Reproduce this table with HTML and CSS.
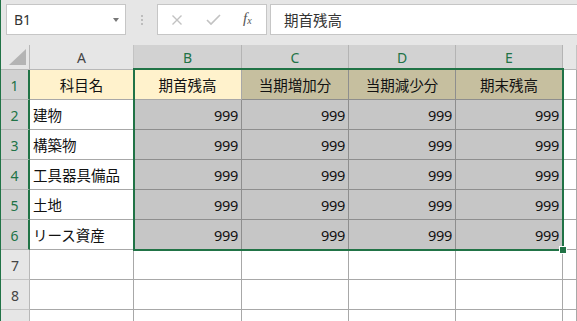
FILE: index.html
```html
<!DOCTYPE html>
<html lang="ja">
<head>
<meta charset="utf-8">
<title>Book1 - Excel</title>
<link rel="stylesheet" href="styles.css">
</head>
<body>
<div class="app">
  <div class="formula-bar">
    <div class="name-box">
      <span class="name-text">B1</span>
      <span class="caret"></span>
    </div>
    <div class="grip"><i></i><i></i><i></i></div>
    <div class="fx-box">
      <svg class="icon" width="12" height="12" viewBox="0 0 12 12"><path d="M1.5 1.5 L10.5 10.5 M10.5 1.5 L1.5 10.5" stroke="#c2c2c2" stroke-width="1.4" fill="none"/></svg>
      <svg class="icon" width="15" height="12" viewBox="0 0 15 12"><path d="M1 6 L5 10 L14 1" stroke="#c2c2c2" stroke-width="1.6" fill="none"/></svg>
      <span class="fx">f<sub>x</sub></span>
    </div>
    <div class="formula-input">期首残高</div>
  </div>

  <div class="sheet">
    <div class="cell corner"><span class="tri"></span></div>
    <div class="cell colhead">A</div>
    <div class="cell colhead sel">B</div>
    <div class="cell colhead sel">C</div>
    <div class="cell colhead sel">D</div>
    <div class="cell colhead sel">E</div>
    <div class="cell colhead"></div>

    <div class="cell rowhead sel">1</div>
    <div class="cell title center">科目名</div>
    <div class="cell title center">期首残高</div>
    <div class="cell tan center">当期増加分</div>
    <div class="cell tan center">当期減少分</div>
    <div class="cell tan center">期末残高</div>
    <div class="cell"></div>

    <div class="cell rowhead sel">2</div>
    <div class="cell">建物</div>
    <div class="cell num">999</div>
    <div class="cell num">999</div>
    <div class="cell num">999</div>
    <div class="cell num">999</div>
    <div class="cell"></div>

    <div class="cell rowhead sel">3</div>
    <div class="cell">構築物</div>
    <div class="cell num">999</div>
    <div class="cell num">999</div>
    <div class="cell num">999</div>
    <div class="cell num">999</div>
    <div class="cell"></div>

    <div class="cell rowhead sel">4</div>
    <div class="cell">工具器具備品</div>
    <div class="cell num">999</div>
    <div class="cell num">999</div>
    <div class="cell num">999</div>
    <div class="cell num">999</div>
    <div class="cell"></div>

    <div class="cell rowhead sel">5</div>
    <div class="cell">土地</div>
    <div class="cell num">999</div>
    <div class="cell num">999</div>
    <div class="cell num">999</div>
    <div class="cell num">999</div>
    <div class="cell"></div>

    <div class="cell rowhead sel">6</div>
    <div class="cell">リース資産</div>
    <div class="cell num">999</div>
    <div class="cell num">999</div>
    <div class="cell num">999</div>
    <div class="cell num">999</div>
    <div class="cell"></div>

    <div class="cell rowhead">7</div>
    <div class="cell"></div><div class="cell"></div><div class="cell"></div><div class="cell"></div><div class="cell"></div><div class="cell"></div>

    <div class="cell rowhead">8</div>
    <div class="cell"></div><div class="cell"></div><div class="cell"></div><div class="cell"></div><div class="cell"></div><div class="cell"></div>

    <div class="cell rowhead"></div>
    <div class="cell"></div><div class="cell"></div><div class="cell"></div><div class="cell"></div><div class="cell"></div><div class="cell"></div>
  </div>

  <!-- range B1:E6 selection frame with its fill handle -->
  <div class="selection"></div>
  <div class="fill-handle"></div>
</div>
</body>
</html>
```

FILE: styles.css
```css
* { box-sizing: border-box; }

html, body {
  margin: 0;
  padding: 0;
  background: #ffffff;
  overflow: hidden;
}

.app {
  position: relative;
  width: 577px;
  height: 321px;
  overflow: hidden;
  border-left: 1px solid #217346;
  background: #e6e6e6;
  font-family: "Noto Sans CJK JP", "Noto Sans", sans-serif;
  color: #1a1a1a;
}

/* ---------- formula bar ---------- */
.formula-bar {
  height: 45px;
  display: flex;
  align-items: flex-start;
  padding-top: 4px;
}

.name-box {
  margin-left: 5px;
  width: 120px;
  height: 31px;
  background: #fff;
  border: 1px solid #c6c6c6;
  display: flex;
  align-items: center;
  justify-content: space-between;
  padding: 0 6px 0 7px;
}

.name-text {
  font-family: "Noto Sans", sans-serif;
  font-size: 14px;
  color: #333;
}

.caret {
  width: 0;
  height: 0;
  border-left: 3.5px solid transparent;
  border-right: 3.5px solid transparent;
  border-top: 4px solid #777;
}

.grip {
  width: 31px;
  height: 31px;
  display: flex;
  flex-direction: column;
  align-items: center;
  justify-content: center;
  gap: 2px;
}

.grip i {
  display: block;
  width: 2px;
  height: 2px;
  background: #bdbdbd;
}

.fx-box {
  width: 110px;
  height: 31px;
  background: #fff;
  border: 1px solid #c6c6c6;
  display: flex;
  align-items: center;
  padding-left: 13px;
  gap: 0;
}

.fx-box .icon:first-child { margin-right: 23px; }
.fx-box .icon:nth-child(2) { margin-right: 22px; }

.fx {
  font-family: "Liberation Serif", serif;
  font-style: italic;
  font-size: 15px;
  color: #555;
  line-height: 1;
  margin-top: -3px;
}

.fx sub {
  font-size: 10px;
  vertical-align: -1px;
}

.formula-input {
  margin-left: 3px;
  flex: 1;
  height: 31px;
  background: #fff;
  border: 1px solid #c6c6c6;
  border-right: none;
  display: flex;
  align-items: center;
  padding-left: 13px;
  font-size: 14.5px;
  color: #333;
}

/* ---------- grid ---------- */
.sheet {
  display: grid;
  grid-template-columns: 29px 104px 108px 107px 107px 107px 1fr;
  grid-template-rows: 25px repeat(9, 30px);
  background: #fff;
}

.cell {
  border-right: 1px solid #a8a8a8;
  border-bottom: 1px solid #a8a8a8;
  display: flex;
  align-items: center;
  padding: 0 3px;
  font-size: 14.5px;
  white-space: nowrap;
  overflow: hidden;
  color: #111;
}

.center { justify-content: center; }

.num {
  justify-content: flex-end;
  background: #c6c6c6;
  border-color: #8e8e8e;
  font-family: "Noto Sans", sans-serif;
  font-size: 14.5px;
  letter-spacing: -0.3px;
  padding-right: 3px;
}

.title {
  background: #fff2cc;
}

.tan {
  background: #c6bf9f;
  border-color: #8e8e8e;
}

.corner {
  background: #e6e6e6;
  border-right-color: #b8b8b8;
  border-bottom-color: #b8b8b8;
  position: relative;
}

.tri {
  position: absolute;
  right: 3px;
  bottom: 4px;
  width: 0;
  height: 0;
  border-left: 17px solid transparent;
  border-bottom: 16px solid #b4b4b4;
}

.colhead {
  background: #e6e6e6;
  border-right-color: #c3c3c3;
  border-bottom-color: #b8b8b8;
  justify-content: center;
  font-family: "Noto Sans", sans-serif;
  font-size: 14px;
  color: #444;
  padding-top: 1px;
}

.colhead.sel {
  background: #d2d2d2;
  border-right-color: #b4b4b4;
  border-bottom: 2px solid #217346;
  color: #217346;
}

.rowhead {
  background: #e6e6e6;
  border-right-color: #b8b8b8;
  border-bottom-color: #c3c3c3;
  justify-content: center;
  font-family: "Noto Sans", sans-serif;
  font-size: 14px;
  color: #444;
  padding: 2px 0 0;
}

.rowhead.sel {
  background: #d2d2d2;
  border-right: 2px solid #217346;
  border-bottom-color: #b4b4b4;
  color: #217346;
}

/* ---------- selection overlay ---------- */
.selection {
  position: absolute;
  left: 132px;
  top: 68px;
  width: 431px;
  height: 183px;
  border: 2px solid #217346;
  pointer-events: none;
}

.fill-handle {
  position: absolute;
  left: 558px;
  top: 246px;
  width: 8px;
  height: 8px;
  background: #217346;
  border: 1px solid #fff;
}
```
